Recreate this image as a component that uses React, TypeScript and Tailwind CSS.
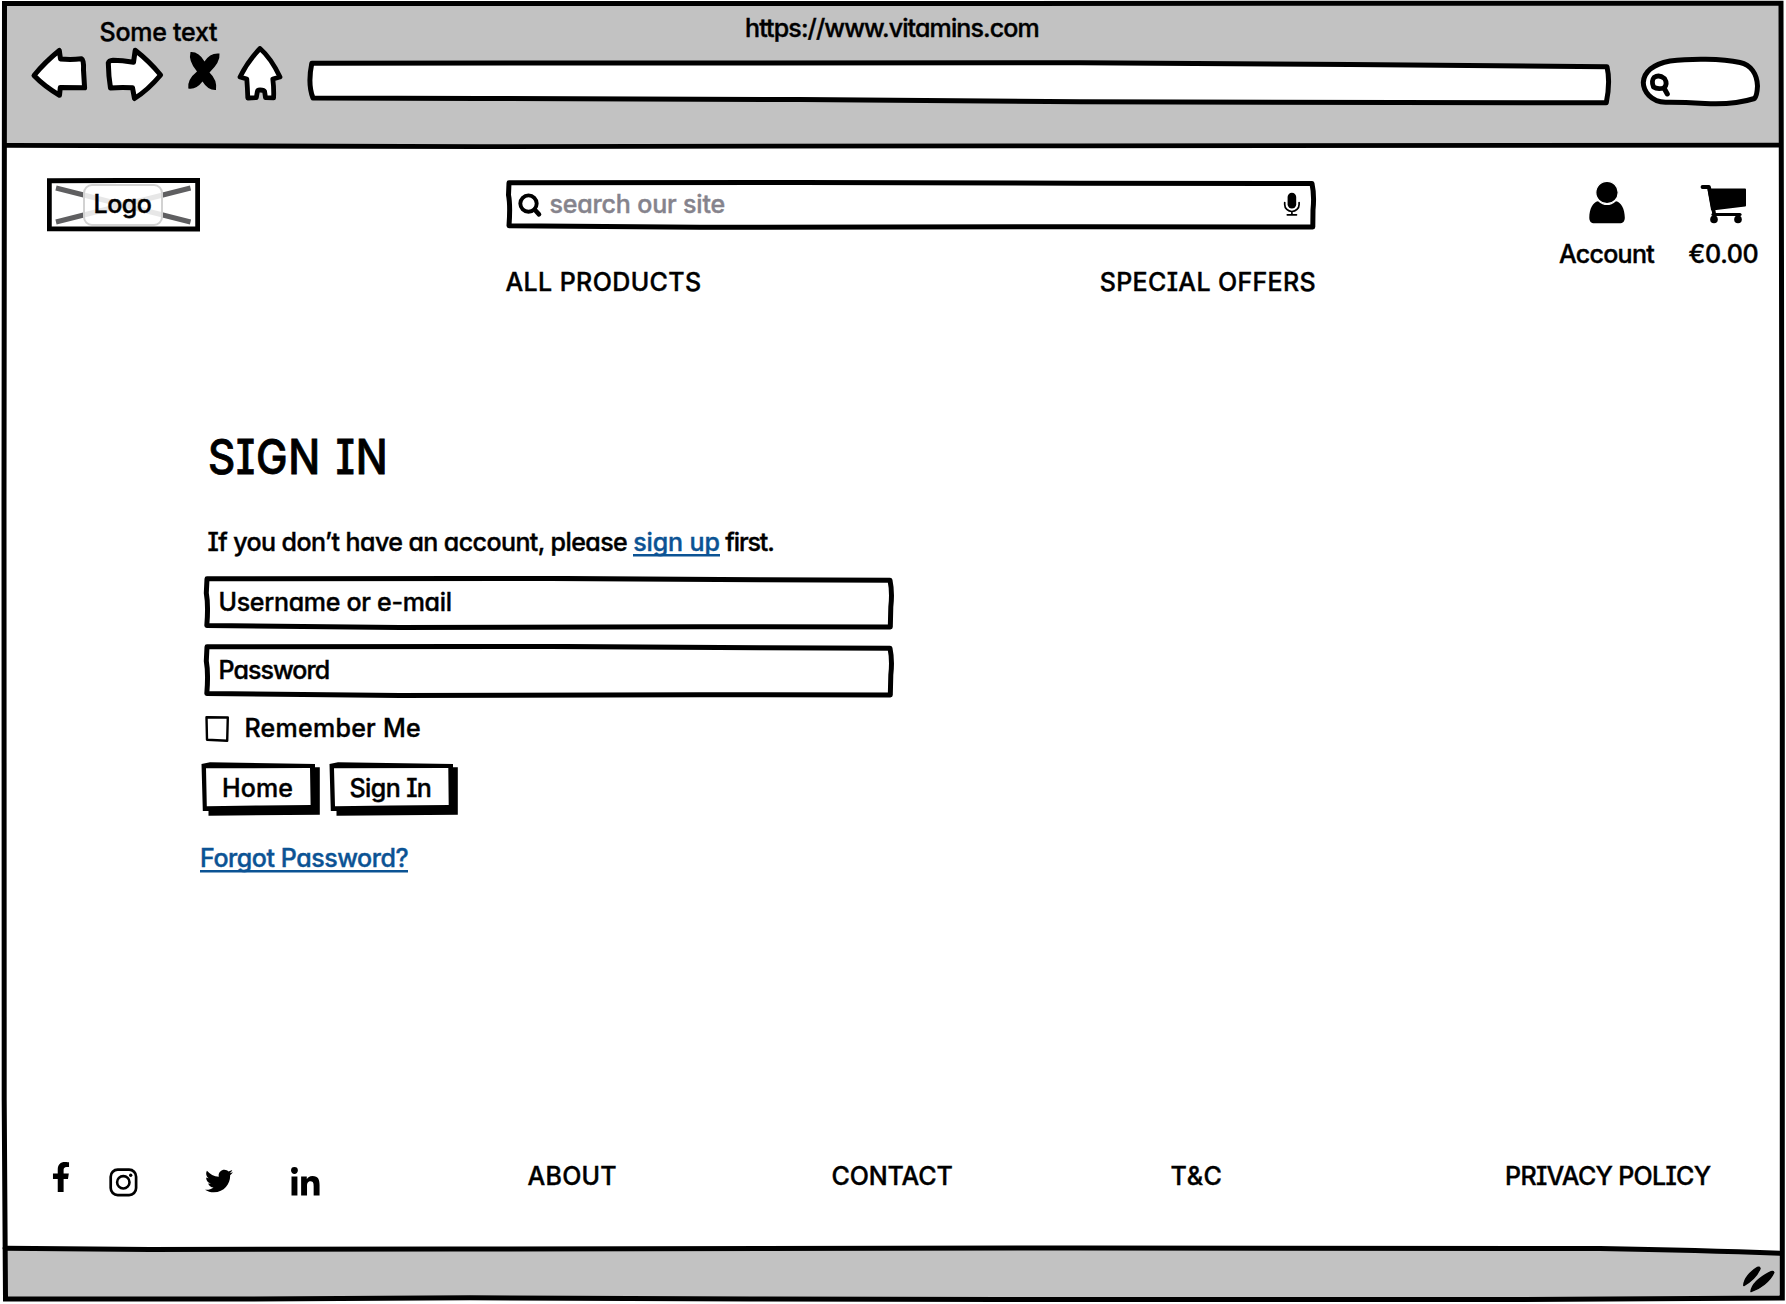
import type { ReactNode } from "react";
import { FaFacebookF, FaLinkedinIn, FaTwitter } from "react-icons/fa";

const line = { fill: "none", stroke: "#000", strokeLinecap: "round", strokeLinejoin: "round" } as const;

/** Hand-drawn outline laid behind the content of a relative box. */
function Outline({ viewBox, children }: { viewBox: string; children: ReactNode }) {
  return (
    <svg className="pointer-events-none absolute inset-0 h-full w-full" viewBox={viewBox} preserveAspectRatio="none" {...line}>
      {children}
    </svg>
  );
}

function Toolbar() {
  return (
    <div className="flex h-[62px] items-start">
      <svg className="ml-[26px] w-[58px] shrink-0" height="62" viewBox="30 46 58 62" {...line} fill="#fff" strokeWidth="5">
        <path d="M34 75.5Q45 62 59.3 50.5L60.5 59Q71 60 81.5 58.8Q84 60 83.5 70L84.6 87.8Q70 87.6 60.3 87.6L59.5 95.3Q44 86 34 75.5Z" />
      </svg>
      <svg className="ml-4 w-[60px] shrink-0" height="62" viewBox="104 46 60 62" {...line} fill="#fff" strokeWidth="5">
        <path d="M108.300 63Q109 60.500 113 60.300Q122 60.500 133.500 62.300L135.200 50.300Q149 61 160.600 75Q148 90 134.500 98.500L132.500 87.800Q121 87 110.500 88Q108.500 76 108.300 63Z" />
      </svg>
      <svg className="ml-[22px] w-[36px] shrink-0" height="62" viewBox="186 46 36 62">
        <path d="M190.500 52Q199 51.500 204.500 61.500Q210 52.500 219.500 53.500Q220.500 62 209.500 72.500Q217.500 80 216 90Q208 90.500 202.500 81.500Q196 90 188.300 88.500Q187 79.500 197 71.500Q188 61 190.500 52Z" />
      </svg>
      <svg className="ml-[14px] w-[48px] shrink-0" height="62" viewBox="236 46 48 62" {...line} fill="#fff" strokeWidth="4.800">
        <path d="M260 48.500Q271 58 280 77L272.800 79Q274 88 273.600 97.800L265.500 97.600L264.600 91.500Q264 90 260 90Q257.500 90 257.300 92L256.300 97.600L247.800 98Q247.500 88 246.800 79L240 77Q248 61 260 48.500Z" />
      </svg>
      <svg className="ml-5 w-[1310px] shrink-0" height="62" viewBox="304 46 1310 62" {...line} fill="#fff" strokeWidth="5">
        <path d="M311.800 63.200L1080 62.800L1350 64.500L1607 66.800Q1610.500 82 1606.300 102.800L1080 101.800L800 99.500L480 98.500L313 98Q307.500 84 311.800 63.200Z" />
      </svg>
      <svg className="ml-6 w-[126px] shrink-0" height="62" viewBox="1638 46 126 62" {...line} fill="#fff" strokeWidth="5">
        <path d="M1665.500 102.200C1651 102 1643.300 91 1643.300 82.500C1644 70 1655 64 1670 61C1690 58.500 1722 58.500 1740 62.500C1751 65 1757 74 1757.500 86Q1757 96 1754.500 98.500C1740 103 1722 104.500 1705 103.500Q1682 102 1665.500 102.200Z" />
        <path d="M1654 77.500Q1659 74 1664.500 78.500Q1668 84 1664 88Q1657 89.500 1653.500 87Q1651 81 1654 77.500Z" strokeWidth="4.800" />
        <path d="M1664 88L1667.300 94" strokeWidth="5" />
      </svg>
    </div>
  );
}

function SearchBox() {
  return (
    <div className="relative flex h-[52px] items-center justify-between pr-[16px] pl-[10.500px]">
      <Outline viewBox="504 178 814 52">
        <path d="M509 182.800L800 182.400L1080 183.200L1312 183.600Q1314.500 195 1313 210L1312.800 227L1080 226.700L700 227.300L509 225.800Q510.500 205 508.500 195Z" strokeWidth="5" />
      </Outline>
      <div className="flex items-center">
        <svg className="w-[28px]" height="28" viewBox="514 191 28 28" {...line}>
          <circle cx="527.500" cy="204.600" r="8.200" strokeWidth="3.900" />
          <path d="M533.800 210.800L538 215.400" strokeWidth="4.600" />
        </svg>
        <span className="ml-[7px] tracking-[-0.170px] text-[#85838c]">search our site</span>
      </div>
      <svg className="w-[20px]" height="26" viewBox="1282 191 20 26" {...line}>
        <rect x="1287.600" y="192.800" width="8.600" height="15.800" rx="4.300" fill="#000" stroke="none" />
        <path d="M1284.700 202.500V204.500A7.200 7 0 0 0 1299.100 204.500V202.500M1291.900 211.500V214.800M1287.300 214.800H1296.500" strokeWidth="1.700" />
      </svg>
    </div>
  );
}

function Field({ children }: { children: ReactNode }) {
  return (
    <div className="relative h-[54px] w-[694px] pt-[11px] pl-[16.500px]">
      <Outline viewBox="202 576 694 54">
        <path d="M207 578.800L550 578.400L760 579.800L890 580.200Q892.500 592 890.800 607L890.300 627L700 626.800L400 627.500L206.800 625.600Q208.500 605 206.300 593Z" strokeWidth="5" />
      </Outline>
      {children}
    </div>
  );
}

function SketchButton({ viewBox, outer, inner, className, children }: { viewBox: string; outer: string; inner: string; className: string; children: ReactNode }) {
  return (
    <button type="button" className={"relative flex h-[54px] items-start pt-[11px] " + className}>
      <Outline viewBox={viewBox}>
        <path d={outer} fill="#000" stroke="none" />
        <path d={inner} fill="#fff" stroke="none" />
      </Outline>
      <span className="relative">{children}</span>
    </button>
  );
}

export default function App() {
  return (
    <main className="relative flex h-[1304px] w-[1786px] flex-col overflow-hidden bg-white px-1 pt-[3px] pb-1 text-[25px] leading-[30px] font-medium whitespace-pre text-black font-['Inter',sans-serif] [-webkit-text-stroke:0.400px_currentColor] [font-feature-settings:'cv11','cv08']">
      <header className="h-[143px] shrink-0 bg-[#c2c2c2]">
        <div className="flex h-[43px] items-start">
          <span className="mt-[14px] ml-[95.500px] w-[119px] tracking-[-0.250px]">Some text</span>
          <span className="mt-[9.500px] ml-[526.500px] tracking-[-0.880px]">https://www.vitamins.com</span>
        </div>
        <Toolbar />
      </header>

      <section className="flex h-[1102px] shrink-0 flex-col">
        <div className="mt-8 flex h-[118px] items-start">
          <div className="relative ml-[43px] flex h-[54px] w-[153px] justify-center">
            <Outline viewBox="47 178 153 54">
              <path d="M56 188L190.500 222M56 222L190.500 188" stroke="#5f5f61" strokeWidth="5" strokeLinecap="butt" />
              <path d="M49.300 180.700L197.700 180.200V229L49.300 228.800Z" strokeWidth="4.900" strokeLinejoin="miter" />
            </Outline>
            <div className="relative mt-[5.500px] mr-[2px] flex h-[42px] w-[80px] justify-center rounded-[9px] border-2 border-[#d2d2d2] bg-white/85 pt-[3.500px] tracking-[-0.500px]">Logo</div>
          </div>

          <div className="ml-[304px] w-[814px]">
            <SearchBox />
            <nav className="mt-[37px] flex justify-between pr-[2px] pl-[1.500px]">
              <a className="tracking-[0.380px]">ALL PRODUCTS</a>
              <a className="tracking-[0.340px]">SPECIAL OFFERS</a>
            </nav>
          </div>

          <div className="ml-[240px] flex w-[97px] flex-col items-center">
            <svg className="w-[40px]" height="48" viewBox="1588 178 40 48">
              <path d="M1599 201.200Q1608 209 1617 201.200C1622 202 1625.800 209 1625.800 217.500C1625.800 221.500 1624 223.300 1620.500 223.300H1595.600C1592 223.300 1590.300 221.500 1590.300 217.500C1590.300 209 1594 202 1599 201.200Z" />
              <circle cx="1608" cy="192.500" r="11.200" stroke="#fff" strokeWidth="1.200" />
            </svg>
            <span className="mt-[12.500px] tracking-[-0.700px]">Account</span>
          </div>
          <div className="ml-[33.500px] flex flex-col items-center">
            <svg className="w-[52px]" height="48" viewBox="1699 178 52 48" {...line}>
              <path d="M1704.500 187H1711L1716 213" strokeWidth="3.800" />
              <path d="M1710.500 189.500H1747L1747 205.500L1714 209.500Z" fill="#000" strokeWidth="2" />
              <path d="M1715 214.500H1742" strokeWidth="3.200" />
              <circle cx="1716" cy="219.400" r="3.800" fill="#000" stroke="none" />
              <circle cx="1740" cy="219.400" r="3.800" fill="#000" stroke="none" />
            </svg>
            <span className="mt-[12.500px] tracking-[-0.300px]">€0.00</span>
          </div>
        </div>

        <form className="mt-[131px] ml-[198px] flex w-[700px] flex-col items-start">
          <h1 className="mt-[0.500px] mb-[-0.500px] ml-[5.500px] origin-left scale-x-[0.880] text-[48px] leading-[58px] tracking-[0.900px] [-webkit-text-stroke:0.800px_currentColor] [word-spacing:3px]">SIGN IN</h1>
          <p className="mt-[42px] ml-[5.500px] flex tracking-[-0.580px]">
            {"If you don’t have an account, please "}
            <a className="h-[30px] tracking-[-0.140px] text-[#0b5394] shadow-[inset_0_-0.500px_#fff,inset_0_-3px_#0b5394]">sign up</a>
            <span className="ml-[5.500px] tracking-[-1.100px]">first.</span>
          </p>
          <div className="mt-[19px] flex flex-col gap-[14px]">
            <Field><span className="tracking-[-0.300px]">Username or e-mail</span></Field>
            <Field><span className="tracking-[-0.950px]">Password</span></Field>
          </div>
          <label className="mt-[15px] flex items-start">
            <svg className="ml-[1.500px] w-[28px]" height="30" viewBox="204 713 28 30" {...line} strokeWidth="2.400">
              <path d="M206.500 717.200L227.800 717.500L227.200 740.800L207 739.800Z" />
            </svg>
            <span className="ml-[13px] tracking-[0.260px]">Remember Me</span>
          </label>
          <div className="mt-[19px] ml-[-1px] flex gap-[9px]">
            <SketchButton
              className="w-[119px] pl-[21px] tracking-[0.100px]"
              viewBox="201 762 119 54"
              outer="M201.500 764L210 762.200L315 764V767.300H319.800V814.700L208.500 815.700V811H202.800Z"
              inner="M206 768.300L310 768L310.600 805L260 805.500L206.800 806.300Z"
            >
              Home
            </SketchButton>
            <SketchButton
              className="w-[129px] pl-[20.500px] tracking-[-0.600px]"
              viewBox="329 762 129 54"
              outer="M329.500 764L338 762.200L453 764V767.300H457.800V814.700L336.500 815.700V811H330.800Z"
              inner="M334 768.300L448.300 768L448.700 805L390 805.500L335 806.300Z"
            >
              Sign In
            </SketchButton>
          </div>
          <a className="mt-[26.500px] ml-[-2px] h-[30px] tracking-[-0.450px] text-[#0b5394] shadow-[inset_0_-0.500px_#fff,inset_0_-3px_#0b5394]">Forgot Password?</a>
        </form>

        <footer className="mt-auto mb-[43px] flex h-[44px] items-start">
          <FaFacebookF className="mt-[1px] ml-[41.500px] text-[30px]" />
          <svg className="mt-[7px] ml-[33px] w-[29px]" height="29" viewBox="109.500 1168 29 29" {...line}>
            <rect x="111.200" y="1169.700" width="25.400" height="25.400" rx="7" strokeWidth="2.700" />
            <circle cx="123.800" cy="1182.300" r="6.200" strokeWidth="2.600" />
            <circle cx="131.200" cy="1175.200" r="1.700" fill="#000" stroke="none" />
          </svg>
          <FaTwitter className="mt-[6px] ml-[67.500px] text-[28px]" />
          <FaLinkedinIn className="mt-[6px] ml-[55.500px] text-[32.600px]" />
          <nav className="flex items-start">
            <a className="ml-[206.500px] w-[90px] tracking-[0.200px]">ABOUT</a>
            <a className="ml-[214px] w-[122px] tracking-[-0.150px]">CONTACT</a>
            <a className="ml-[217px] w-[52px] tracking-[0.600px]">T&amp;C</a>
            <a className="ml-[282.500px] tracking-[-0.700px]">PRIVACY POLICY</a>
          </nav>
        </footer>
      </section>

      <div className="h-[52px] shrink-0 bg-[#c2c2c2]" />

      <Outline viewBox="0 0 1786 1304">
        <path d="M1300 1247L1600 1247L1782 1247V1253L1600 1248Z" fill="#fff" stroke="none" />
        <path d="M4.500 3.500L1781 3.300L1782.300 700V1298L1500 1299.600L1000 1299.500L750 1299L470 1297.800L250 1299L5.500 1299L4.200 1100L4 500Z" strokeWidth="5" strokeLinejoin="miter" />
        <path d="M6 145.300L480 146.600L1080 145.800L1780 145.200" strokeWidth="4.800" />
        <path d="M5 1248.300L150 1249.400L450 1249L1080 1248L1600 1248.600Q1700 1250.500 1780 1253.300" strokeWidth="5" />
        <path d="M1757.500 1267.500Q1759.500 1266.500 1760 1268.500C1757 1276 1750 1282 1743.800 1285.500C1744 1279 1750 1272 1757.500 1267.500ZM1769.500 1272.500Q1773 1270.500 1773.800 1272.500C1770 1281 1760 1289 1751 1291.500C1752 1284 1761 1277 1769.500 1272.500Z" fill="#000" strokeWidth="1.500" />
      </Outline>
    </main>
  );
}
